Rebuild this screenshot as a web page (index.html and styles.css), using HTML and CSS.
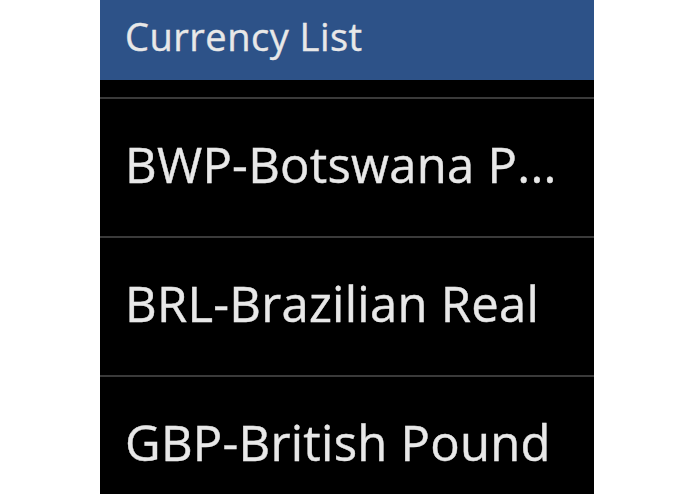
FILE: index.html
```html
<!DOCTYPE html>
<html>
<head>
<meta charset="utf-8">
<link rel="stylesheet" href="styles.css">
</head>
<body>
<div class="panel">
  <div class="header"><span class="title">Currency List</span></div>
  <div class="spacer"></div>
  <ul class="list">
    <li class="row"><span class="label">BWP-Botswana P...</span></li>
    <li class="row"><span class="label">BRL-Brazilian Real</span></li>
    <li class="row"><span class="label">GBP-British Pound</span></li>
  </ul>
</div>
</body>
</html>
```
FILE: styles.css
```css
html, body {
  margin: 0;
  padding: 0;
  background: #ffffff;
  height: 494px;
  overflow: hidden;
}
.panel {
  margin-left: 100px;
  width: 494px;
  height: 494px;
  background: #000000;
  font-family: "Open Sans", "DejaVu Sans", sans-serif;
  font-weight: 400;
  color: #e8e8e8;
  -webkit-text-stroke: 0.4px #e8e8e8;
}
.header {
  height: 80px;
  background: #2d5288;
  display: flex;
  align-items: center;
  padding-left: 25px;
  box-sizing: border-box;
}
.title {
  font-size: 38px;
  line-height: 1;
  padding-bottom: 9px;
  letter-spacing: 0.5px;
}
.spacer {
  height: 17px;
}
.list {
  list-style: none;
  margin: 0;
  padding: 0;
}
.row {
  border-top: 2px solid #3a3a3a;
  height: 137px;
  display: flex;
  align-items: center;
  padding-left: 25px;
}
.label {
  font-size: 49px;
  line-height: 1;
  padding-bottom: 7px;
  letter-spacing: 0.25px;
  white-space: nowrap;
}
```
